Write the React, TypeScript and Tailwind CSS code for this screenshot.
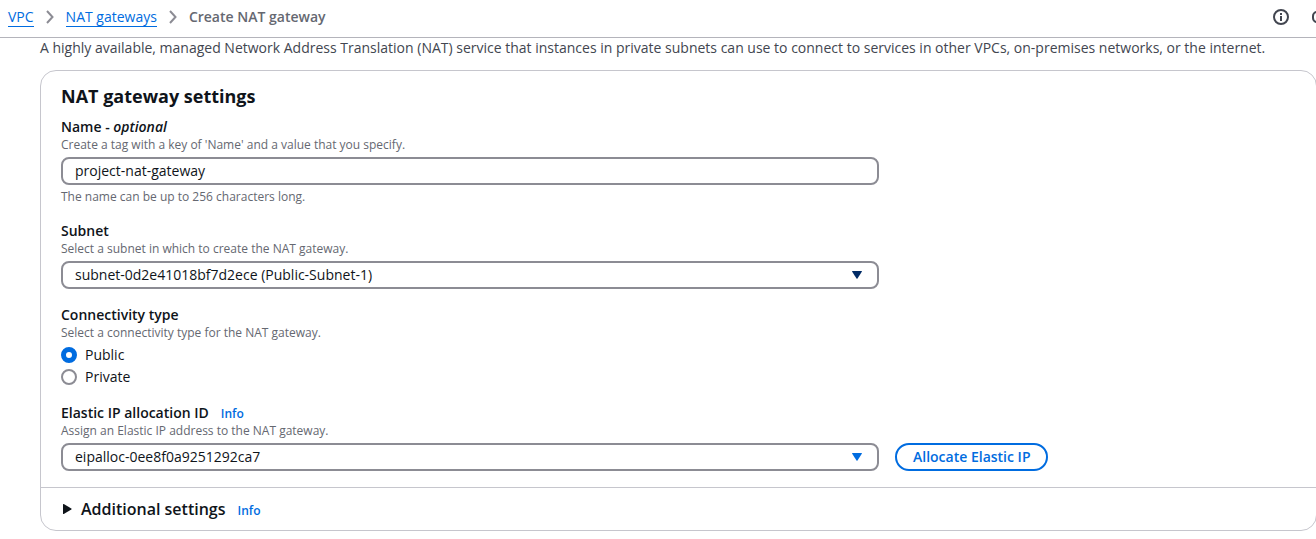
import { useState, type ReactNode } from 'react';

function Breadcrumbs() {
  return (
    <nav aria-label="Breadcrumbs">
      <ol className="flex items-center gap-3">
        <li>
          <a href="#vpc" className="border-b border-[#006ce0] text-[#006ce0]">VPC</a>
        </li>
        <Chevron />
        <li>
          <a href="#nat-gateways" className="border-b border-[#006ce0] text-[#006ce0]">NAT gateways</a>
        </li>
        <Chevron />
        <li className="font-semibold text-[#656871]" aria-current="page">Create NAT gateway</li>
      </ol>
    </nav>
  );
}

function Chevron() {
  return (
    <li aria-hidden="true">
      <svg width="8" height="14" viewBox="0 0 8 14" fill="none" stroke="#8c8c94" strokeWidth="2">
        <path d="M1 1l5.500 6L1 13" />
      </svg>
    </li>
  );
}

function InfoLink({ href }: { href: string }) {
  return <a href={href} className="text-xs leading-4 font-semibold text-[#006ce0]">Info</a>;
}

function Hint({ children }: { children: ReactNode }) {
  return <p className="text-xs leading-4 text-[#656871]">{children}</p>;
}

function Select({ id, value, arrow }: { id: string; value: string; arrow: string }) {
  return (
    <div className="relative w-full max-w-[818px]">
      <select
        id={id}
        className="block h-7 w-full appearance-none rounded-lg border-2 border-[#8c8c94] bg-white px-3 text-sm leading-5 text-[#0f141a]"
      >
        <option>{value}</option>
      </select>
      <svg className={`pointer-events-none absolute top-2.5 right-4 ${arrow}`} width="12" height="8" viewBox="0 0 12 8" fill="currentColor">
        <path d="M1.5 0h9q.7.1.3.8L6.5 7.5q-.5.7-1 0L1.2.8Q.8.1 1.5 0z" />
      </svg>
    </div>
  );
}

export default function App() {
  const [name, setName] = useState('project-nat-gateway');
  const [type, setType] = useState('Public');

  return (
    <div className="overflow-hidden bg-white font-['Open_Sans','Noto_Sans',sans-serif] text-sm leading-5 text-[#0f141a]">
      <header className="flex h-[38px] items-center justify-between border-b border-[#b4b4bb] pb-1 pl-2">
        <Breadcrumbs />
        <div className="-mr-3 flex items-center gap-[23px]">
          <button type="button" aria-label="Open help panel">
            <svg width="16" height="16" viewBox="0 0 16 16" fill="none" stroke="#424650" strokeWidth="2">
              <circle cx="8" cy="8" r="7" />
              <path d="M8 4v2M8 7v5" />
            </svg>
          </button>
          <button type="button" aria-label="Open tools">
            <svg width="16" height="16" viewBox="0 0 16 16" fill="none" stroke="#424650" strokeWidth="2">
              <rect x="1" y="3" width="14" height="10" rx="4" />
            </svg>
          </button>
        </div>
      </header>

      <main className="-mr-px pl-10">
        <p className="text-[#424650]">
          A highly available, managed Network Address Translation (NAT) service that instances in private subnets can use to connect to services in other VPCs, on-premises networks, or the internet.
        </p>

        <form className="mt-3 rounded-2xl border border-[#c6c6cd]">
          <div className="flex flex-col gap-4 px-5 pb-4">
            <div>
              <h2 className="pt-3 pb-2 text-lg leading-[26px] font-bold">NAT gateway settings</h2>
              <label htmlFor="name" className="block font-semibold">
                Name - <i>optional</i>
              </label>
              <Hint>Create a tag with a key of 'Name' and a value that you specify.</Hint>
              <input
                id="name"
                type="text"
                value={name}
                onChange={(e) => setName(e.target.value)}
                className="my-1 block h-7 w-full max-w-[818px] rounded-lg border-2 border-[#8c8c94] px-3 pb-0.5"
              />
              <Hint>The name can be up to 256 characters long.</Hint>
            </div>

            <div>
              <label htmlFor="subnet" className="block font-semibold">Subnet</label>
              <Hint>Select a subnet in which to create the NAT gateway.</Hint>
              <div className="mt-1">
                <Select id="subnet" value="subnet-0d2e41018bf7d2ece (Public-Subnet-1)" arrow="text-[#002b66]" />
              </div>
            </div>

            <fieldset>
              <legend className="font-semibold">Connectivity type</legend>
              <Hint>Select a connectivity type for the NAT gateway.</Hint>
              <div className="mt-1 flex flex-col items-start gap-0.5">
                {['Public', 'Private'].map((option) => (
                  <label key={option} className="flex items-center gap-2">
                    <input
                      type="radio"
                      name="connectivity"
                      checked={type === option}
                      onChange={() => setType(option)}
                      className="size-4 appearance-none rounded-full border-2 border-[#8c8c94] bg-white checked:border-5 checked:border-[#006ce0]"
                    />
                    {option}
                  </label>
                ))}
              </div>
            </fieldset>

            <div>
              <div className="flex items-baseline gap-3">
                <label htmlFor="elastic-ip" className="font-semibold">Elastic IP allocation ID</label>
                <InfoLink href="#elastic-ip-info" />
              </div>
              <Hint>Assign an Elastic IP address to the NAT gateway.</Hint>
              <div className="mt-1 flex gap-4">
                <Select id="elastic-ip" value="eipalloc-0ee8f0a9251292ca7" arrow="text-[#006ce0]" />
                <button type="button" className="h-7 shrink-0 rounded-full border-2 border-[#006ce0] px-4 font-semibold text-[#006ce0]">
                  Allocate Elastic IP
                </button>
              </div>
            </div>
          </div>

          <div className="flex items-baseline gap-3 border-t border-[#c6c6cd] px-5 py-[9px]">
            <button type="button" aria-expanded="false" className="flex items-center gap-2 text-base font-semibold">
              <svg width="12" height="12" viewBox="0 0 12 12" fill="currentColor">
                <path d="M2 1.5Q2 .6 2.8 1l7.5 4.5q.7.5 0 1L2.8 11Q2 11.4 2 10.5z" />
              </svg>
              Additional settings
            </button>
            <InfoLink href="#additional-info" />
          </div>
        </form>
      </main>
    </div>
  );
}
